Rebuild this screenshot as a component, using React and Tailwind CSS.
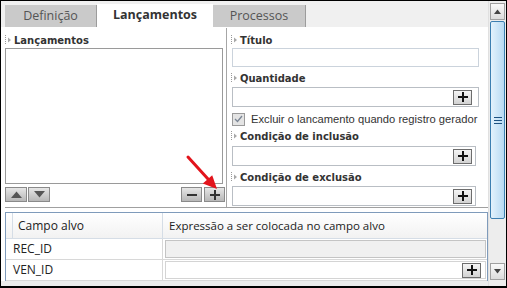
import React from "react";

const Grip = () => (
  <svg width="7" height="10" viewBox="0 0 7 10" className="shrink-0">
    {[0, 2, 4, 6, 8].map((y) => (
      <rect key={y} x="0" y={y} width="1" height="1" fill="#9a9a9a" />
    ))}
    <path d="M3 2.5 L6 5 L3 7.5 Z" fill="#a8a8a8" />
  </svg>
);

const Label = ({ children, className = "" }) => (
  <div
    className={`flex items-center gap-[2px] h-[14px] text-[10px] font-bold text-[#333] whitespace-nowrap ${className}`}
    style={{ fontFamily: '"DejaVu Sans", sans-serif' }}
  >
    <Grip />
    <span>{children}</span>
  </div>
);

const PlusIcon = ({ color = "#111" }) => (
  <svg width="10" height="10" viewBox="0 0 10 10">
    <rect x="0" y="4" width="10" height="2" fill={color} />
    <rect x="4" y="0" width="2" height="10" fill={color} />
  </svg>
);

const MinusIcon = () => (
  <svg width="10" height="10" viewBox="0 0 10 10">
    <rect x="0" y="4" width="10" height="2" fill="#333" />
  </svg>
);

const PlusBtn = () => (
  <div className="w-[19px] h-[15px] border border-[#6d6d6d] bg-gradient-to-b from-[#f4f4f4] to-[#d2d2d2] flex items-center justify-center">
    <PlusIcon />
  </div>
);

const GrayBtn = ({ children, w = "w-[22px]" }) => (
  <div className={`${w} h-[15px] border border-[#8a8a8a] bg-gradient-to-b from-[#e6e6e6] to-[#b8b8b8] flex items-center justify-center`}>
    {children}
  </div>
);

export default function App() {
  return (
    <div
      className="relative w-[507px] h-[288px] border border-black border-b-2 bg-[#f0f0f0] flex overflow-hidden"
      style={{ fontFamily: '"Open Sans", sans-serif' }}
    >
      {/* content */}
      <div className="w-[487px] flex flex-col">
        {/* tab strip */}
        <div className="h-[26px] flex items-end pl-[4px] bg-[#f0f0f0] shrink-0">
          <div className="w-[92px] h-[22px] bg-[#cacaca] border-r border-[#9c9c9c] flex items-center justify-center text-[12.5px] text-[#555]">
            Definição
          </div>
          <div className="w-[116px] h-[23px] bg-white flex items-center justify-center text-[12.5px] font-bold text-[#333]">
            Lançamentos
          </div>
          <div className="w-[93px] h-[22px] bg-[#cacaca] border-r border-[#9c9c9c] flex items-center justify-center text-[12.5px] text-[#555]">
            Processos
          </div>
        </div>

        {/* main */}
        <div className="h-[180px] bg-white flex shrink-0">
          {/* left panel */}
          <div className="w-[225px] pl-[3px] pr-[1px] flex flex-col">
            <Label className="mt-[6px] ml-[1px]">Lançamentos</Label>
            <div className="mt-[1px] ml-[1px] w-[218px] h-[136px] border border-[#9a9a9a] bg-white" />
            <div className="mt-[3px] ml-[1px] flex items-center">
              <GrayBtn>
                <svg width="11" height="7" viewBox="0 0 11 7">
                  <path d="M0 7 L5.5 0.5 L11 7 Z" fill="#555" />
                </svg>
              </GrayBtn>
              <div className="w-[1px]" />
              <GrayBtn>
                <svg width="11" height="7" viewBox="0 0 11 7">
                  <path d="M0 0 L11 0 L5.5 6.5 Z" fill="#555" />
                </svg>
              </GrayBtn>
              <div className="flex-1" />
              <GrayBtn w="w-[21px]">
                <MinusIcon />
              </GrayBtn>
              <div className="w-[2px]" />
              <GrayBtn w="w-[21px]">
                <PlusIcon color="#333" />
              </GrayBtn>
            </div>
          </div>
          {/* divider */}
          <div className="w-[1px] mt-[1px] bg-[#a6a6a6]" />
          {/* right panel */}
          <div className="flex-1 pl-[5px] flex flex-col">
            <Label className="mt-[6px] -ml-[1px]">Título</Label>
            <div className="mt-[1px] w-[247px] h-[19px] border border-[#cbd3dc] bg-white" />
            <Label className="mt-[4px] -ml-[1px]">Quantidade</Label>
            <div className="mt-[2px] w-[247px] h-[20px] border border-[#b9bec4] bg-white flex items-center justify-end pr-[6px]">
              <PlusBtn />
            </div>
            <div
              className="mt-[5px] w-[250px] h-[14px] flex items-center overflow-hidden whitespace-nowrap text-[11.2px] text-[#333]"
              style={{ fontFamily: '"Liberation Sans", sans-serif' }}
            >
              <div className="w-[13px] h-[13px] shrink-0 border border-[#9a9a9a] bg-[#e4e4e4] flex items-center justify-center">
                <svg width="9" height="8" viewBox="0 0 9 8">
                  <path d="M1 4 L3.5 6.5 L8 1" stroke="#7a8594" strokeWidth="1.3" fill="none" />
                </svg>
              </div>
              <span className="ml-[6px]">Excluir o lancamento quando registro gerador</span>
            </div>
            <Label className="mt-[3px] -ml-[1px]">Condição de inclusão</Label>
            <div className="mt-[3px] w-[244px] h-[20px] border border-[#b9bec4] bg-white flex items-center justify-end pr-[3px]">
              <PlusBtn />
            </div>
            <Label className="mt-[4px] -ml-[1px]">Condição de exclusão</Label>
            <div className="mt-[2px] w-[244px] h-[20px] border border-[#b9bec4] bg-white flex items-center justify-end pr-[3px]">
              <PlusBtn />
            </div>
          </div>
        </div>

        {/* separator + grid area */}
        <div className="bg-white flex-1 flex flex-col">
          <div className="ml-[4px] h-[1px] bg-[#a0a0a0]" />
          <div className="h-[4px]" />
          <div className="ml-[4px] w-[483px] h-[69px] border-l border-r border-t border-[#7f9bbb] overflow-hidden text-[12px] text-[#222]">
            {/* header */}
            <div className="h-[26px] flex border-b border-[#d5dde6] bg-gradient-to-b from-white to-[#f2f2f2]">
              <div className="w-[7px] border-r border-[#d5dde6]" />
              <div className="w-[150px] border-r border-[#d5dde6] flex items-center pl-[5px]">Campo alvo</div>
              <div className="flex-1 flex items-center pl-[6px] text-[11.5px]">Expressão a ser colocada no campo alvo</div>
            </div>
            {/* row 1 */}
            <div className="h-[21px] flex border-b border-[#d8d8d8]">
              <div className="w-[157px] border-r border-[#d8d8d8] flex items-center pl-[7px]">REC_ID</div>
              <div className="flex-1 pl-[2px] pr-[1px] py-[1px]">
                <div className="h-full border border-[#c4c4c4] bg-[#f0f0f0]" />
              </div>
            </div>
            {/* row 2 */}
            <div className="h-[21px] flex border-b border-[#d8d8d8]">
              <div className="w-[157px] border-r border-[#d8d8d8] flex items-center pl-[7px]">VEN_ID</div>
              <div className="flex-1 pl-[2px] pr-[1px] py-[1px]">
                <div className="h-full border border-[#d4d4d4] bg-white flex items-center justify-end pr-[4px]">
                  <PlusBtn />
                </div>
              </div>
            </div>
          </div>
          <div className="flex-1 bg-[#ececec]" />
        </div>
      </div>

      {/* scrollbar */}
      <div className="w-[18px] bg-[#ededed] border-l border-[#e0e0e0] flex flex-col items-center pt-[2px] pb-[6px]">
        <div className="w-[15px] h-[17px] border border-[#a0a0a0] bg-gradient-to-b from-[#fafafa] to-[#dcdcdc] flex items-center justify-center">
          <svg width="7" height="5" viewBox="0 0 7 5">
            <path d="M0 5 L3.5 0.5 L7 5 Z" fill="#444" />
          </svg>
        </div>
        <div className="mt-[1px] w-[15px] h-[198px] rounded-[2px] border border-[#3c7fb1] bg-gradient-to-r from-[#e3f2fc] to-[#b7daf3] flex items-center justify-center">
          <svg width="8" height="7" viewBox="0 0 8 7">
            <rect x="0" y="0" width="8" height="1" fill="#1d5281" />
            <rect x="0" y="3" width="8" height="1" fill="#1d5281" />
            <rect x="0" y="6" width="8" height="1" fill="#1d5281" />
          </svg>
        </div>
        <div className="flex-1" />
        <div className="w-[15px] h-[17px] border border-[#a0a0a0] bg-gradient-to-b from-[#fafafa] to-[#dcdcdc] flex items-center justify-center">
          <svg width="7" height="5" viewBox="0 0 7 5">
            <path d="M0 0 L7 0 L3.5 4.5 Z" fill="#444" />
          </svg>
        </div>
      </div>

      {/* red arrow annotation */}
      <svg className="absolute left-[179px] top-[149px] pointer-events-none" width="45" height="45" viewBox="0 0 45 45">
        <line x1="8" y1="7" x2="28" y2="29" stroke="#e2141c" strokeWidth="3" strokeLinecap="round" />
        <path d="M37 39 L22.8 33.6 L32.2 25.2 Z" fill="#e2141c" />
      </svg>
    </div>
  );
}
